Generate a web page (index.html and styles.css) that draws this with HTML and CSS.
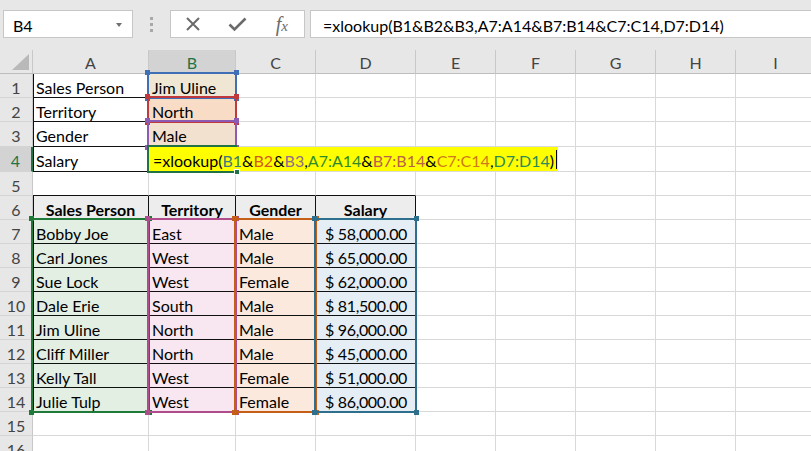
FILE: index.html
```html
<!DOCTYPE html>
<html lang="en">
<head>
  <meta charset="UTF-8">
  <title>xlookup - Excel</title>
  <link rel="stylesheet" href="styles.css">
</head>
<body>

<div class="barra">
  <div class="nombre">B4<span class="flecha"></span></div>
  <div class="puntos"><i></i><i></i><i></i></div>
  <div class="botones">
    <svg width="16" height="14" viewBox="0 0 16 14"><path d="M2 1 L14 13 M14 1 L2 13" stroke="#6b6b6b" stroke-width="2" fill="none"/></svg>
    <svg width="19" height="15" viewBox="0 0 19 15"><path d="M1.5 7.5 L6.5 12.5 L17.5 1.5" stroke="#6b6b6b" stroke-width="2.6" fill="none"/></svg>
    <span class="fx">f<small>x</small></span>
  </div>
  <div class="formula">=xlookup(B1&amp;B2&amp;B3,A7:A14&amp;B7:B14&amp;C7:C14,D7:D14)</div>
</div>

<div class="hoja">
  <div class="celdas" id="celdas"></div>

  <div class="ref azul r-b1"><i></i><i></i><i></i><i></i></div>
  <div class="ref rojo r-b2"><i></i><i></i><i></i><i></i></div>
  <div class="ref morado r-b3"><i></i><i></i><i></i><i></i></div>
  <div class="ref verde r-a"><i></i><i></i><i></i><i></i></div>
  <div class="ref rosa r-b"><i></i><i></i><i></i><i></i></div>
  <div class="ref naranja r-c"><i></i><i></i><i></i><i></i></div>
  <div class="ref teal r-d"><i></i><i></i><i></i><i></i></div>

  <div class="edicion">=xlookup(<span class="t1">B1</span>&amp;<span class="t2">B2</span>&amp;<span class="t3">B3</span>,<span class="t4">A7:A14</span>&amp;<span class="t5">B7:B14</span>&amp;<span class="t6">C7:C14</span>,<span class="t7">D7:D14</span>)<span class="cursor"></span></div>
  <div class="activa-borde"><span class="controlador"></span></div>
</div>

<script>
  const columnas = ['A', 'B', 'C', 'D', 'E', 'F', 'G', 'H', 'I'];
  const datos = {
    1: ['Sales Person', 'Jim Uline'],
    2: ['Territory', 'North'],
    3: ['Gender', 'Male'],
    4: ['Salary'],
    6: ['Sales Person', 'Territory', 'Gender', 'Salary'],
    7: ['Bobby Joe', 'East', 'Male', 58000],
    8: ['Carl Jones', 'West', 'Male', 65000],
    9: ['Sue Lock', 'West', 'Female', 62000],
    10: ['Dale Erie', 'South', 'Male', 81500],
    11: ['Jim Uline', 'North', 'Male', 96000],
    12: ['Cliff Miller', 'North', 'Male', 45000],
    13: ['Kelly Tall', 'West', 'Female', 51000],
    14: ['Julie Tulp', 'West', 'Female', 86000]
  };
  const celdas = document.getElementById('celdas');

  function agregar(clase, html) {
    const d = document.createElement('div');
    d.className = clase;
    d.innerHTML = html;
    celdas.appendChild(d);
  }

  agregar('esquina', '');
  columnas.forEach(c => agregar(c === 'B' ? 'col activa' : 'col', c));

  for (let r = 1; r <= 16; r++) {
    agregar(r === 4 ? 'num activa' : 'num', r);
    const fila = datos[r] || [];
    for (let c = 0; c < columnas.length; c++) {
      let clase = 'celda';
      let valor = fila[c] !== undefined ? fila[c] : '';
      if (r <= 4 && c === 0) clase += ' negro izq';
      if (r <= 3 && c === 1) clase += ' fondo-b' + r;
      if (r === 5 && c < 4) clase += ' negro-inf';
      if (r >= 6 && r <= 14 && c < 4) clase += ' negro';
      if (r >= 6 && r <= 14 && c === 0) clase += ' izq';
      if (r === 6 && c < 4) clase += ' enc';
      if (r >= 7 && r <= 14 && c < 4) clase += ' rango-' + 'abcd'[c];
      if (typeof valor === 'number') {
        clase += ' dinero';
        valor = '<span>$</span><span>' + valor.toLocaleString('en-US', { minimumFractionDigits: 2 }) + '</span>';
      }
      agregar(clase, valor);
    }
  }
</script>

</body>
</html>
```

FILE: styles.css
```css
* {
  box-sizing: border-box;
}
body {
  margin: 0;
  width: 811px;
  height: 451px;
  overflow: hidden;
  background: #fff;
  font-family: Lato, "Open Sans", sans-serif;
  font-size: 16px;
  color: #000;
}

/* barra de formulas */
.barra {
  display: flex;
  height: 50px;
  padding: 10px 0 12px 3px;
  background: #e7e7e7;
}
.nombre {
  width: 130px;
  background: #fff;
  border: 1px solid #c6c6c6;
  display: flex;
  align-items: center;
  justify-content: space-between;
  padding: 2px 10px 0 9px;
}
.flecha {
  width: 0;
  border-left: 3px solid transparent;
  border-right: 3px solid transparent;
  border-top: 4px solid #707070;
}
.puntos {
  width: 37px;
  display: flex;
  flex-direction: column;
  align-items: center;
  justify-content: center;
  gap: 3px;
}
.puntos i {
  width: 3px;
  height: 3px;
  background: #a8a8a8;
}
.botones {
  width: 135px;
  background: #fff;
  border: 1px solid #c6c6c6;
  display: grid;
  grid-template-columns: repeat(3, 1fr);
  align-items: center;
  justify-items: center;
}
.fx {
  font-family: "Liberation Serif", serif;
  font-style: italic;
  font-size: 20px;
  color: #6b6b6b;
}
.fx small {
  font-size: 15px;
}
.formula {
  flex: 1;
  margin-left: 5px;
  background: #fff;
  border: 1px solid #c6c6c6;
  border-right: none;
  padding: 2px 0 0 12px;
  display: flex;
  align-items: center;
  white-space: nowrap;
}

/* hoja */
.hoja {
  position: relative;
}
.celdas {
  display: grid;
  grid-template-columns: 33px 116px 87px 80px 100px repeat(5, 80px);
  grid-template-rows: 24px 24px 24px 25px 25px 24px 24px repeat(10, 24px);
}
.esquina {
  background: #e7e7e7;
  border-right: 1px solid #c8c8c8;
  border-bottom: 1px solid #bdbdbd;
  display: flex;
  justify-content: flex-end;
  align-items: flex-end;
  padding: 0 3px 3px 0;
}
.esquina::after {
  content: "";
  border-left: 17px solid transparent;
  border-bottom: 16px solid #b9b9b9;
}
.col {
  background: #e7e7e7;
  border-right: 1px solid #c8c8c8;
  border-bottom: 1px solid #bdbdbd;
  color: #444;
  display: flex;
  justify-content: center;
  align-items: center;
  padding-top: 2px;
}
.col.activa {
  background: #d3d3d3;
  color: #217346;
  border-bottom: 2px solid #217346;
}
.num {
  background: #e7e7e7;
  border-right: 1px solid #c8c8c8;
  border-bottom: 1px solid #d4d4d4;
  color: #444;
  display: flex;
  justify-content: center;
  align-items: center;
  padding-top: 3px;
}
.num.activa {
  background: #d3d3d3;
  color: #217346;
  border-right: 2px solid #217346;
}
.celda {
  border-right: 1px solid #d9d9d9;
  border-bottom: 1px solid #d9d9d9;
  padding: 3px 3px 0 3px;
  display: flex;
  align-items: center;
  white-space: nowrap;
  overflow: hidden;
}
.negro {
  border-right-color: #111;
  border-bottom-color: #111;
}
.negro-inf {
  border-bottom-color: #111;
}
.izq {
  box-shadow: inset 1px 0 #111;
}
.enc {
  background: #ededed;
  font-weight: bold;
  justify-content: center;
}
.fondo-b1 { background: #efe7d3; }
.fondo-b2 { background: #f8dcc6; }
.fondo-b3 { background: #f1e1ce; }
.rango-a { background: #e3efe3; }
.rango-b { background: #f8e7f0; }
.rango-c { background: #fbe9dd; }
.rango-d { background: #e5eef4; }
.dinero {
  justify-content: space-between;
  padding: 3px 8px 0 9px;
}
.dinero span:last-child {
  letter-spacing: -0.35px;
}

/* referencias de la formula */
.ref {
  position: absolute;
  border: 2px solid currentColor;
}
.ref i {
  position: absolute;
  width: 5px;
  height: 5px;
  background: currentColor;
}
.ref i:nth-child(1) { top: -4px; left: -4px; }
.ref i:nth-child(2) { top: -4px; right: -4px; }
.ref i:nth-child(3) { bottom: -4px; left: -4px; }
.ref i:nth-child(4) { bottom: -4px; right: -4px; }
.azul { color: #3f6fb4; }
.rojo { color: #c0393d; }
.morado { color: #8c5cb4; }
.verde { color: #1f7a3a; }
.rosa { color: #b04c8c; }
.naranja { color: #c55e17; }
.teal { color: #2f6f8e; }
.r-b1 { left: 147px; top: 22px; width: 90px; height: 27px; }
.r-b2 { left: 147px; top: 46px; width: 90px; height: 27px; }
.r-b3 { left: 147px; top: 70px; width: 90px; height: 28px; }
.r-a { left: 31px; top: 168px; width: 119px; height: 195px; }
.r-b { left: 147px; top: 168px; width: 90px; height: 195px; }
.r-c { left: 234px; top: 168px; width: 83px; height: 195px; }
.r-d { left: 314px; top: 168px; width: 103px; height: 195px; }

/* celda en edicion */
.edicion {
  position: absolute;
  left: 149px;
  top: 97px;
  height: 24px;
  padding: 3px 1px 0 4px;
  background: #ffff00;
  display: flex;
  align-items: center;
  white-space: nowrap;
}
.t1 { color: #3c7a80; }
.t2 { color: #cf5a1e; }
.t3 { color: #8e6c8c; }
.t4 { color: #2f8a2c; }
.t5 { color: #b8604c; }
.t6 { color: #cc7a1c; }
.t7 { color: #2d8a58; }
.cursor {
  width: 1px;
  height: 19px;
  margin: -3px 0 0 2px;
  background: #000;
}
.activa-borde {
  position: absolute;
  left: 147px;
  top: 95px;
  width: 90px;
  height: 28px;
  border: 2px solid #217346;
  border-right: none;
}
.controlador {
  position: absolute;
  right: -3px;
  bottom: -4px;
  width: 6px;
  height: 6px;
  background: #217346;
  border: 1px solid #fff;
}
```
